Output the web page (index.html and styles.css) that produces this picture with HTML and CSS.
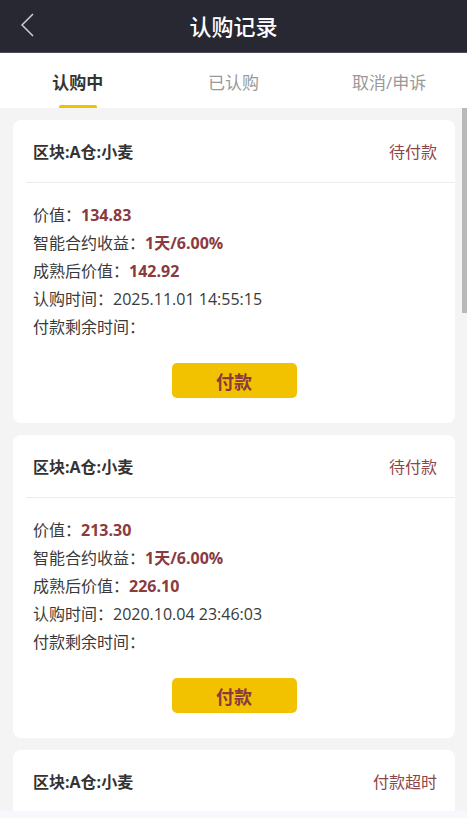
FILE: index.html
```html
<!DOCTYPE html>
<html lang="zh-CN">
<head>
<meta charset="utf-8">
<title>认购记录</title>
<link rel="stylesheet" href="styles.css">
</head>
<body>
<div class="app">
  <header class="topbar">
    <svg class="back" width="16" height="26" viewBox="0 0 16 26"><polyline points="12,1 1,12 12,23" fill="none" stroke="#d0d0d4" stroke-width="1.5"/></svg>
    <h1 class="title">认购记录</h1>
  </header>
  <nav class="tabs">
    <div class="tab active">认购中</div>
    <div class="tab">已认购</div>
    <div class="tab">取消/申诉</div>
  </nav>
  <div class="viewport">
    <main class="list">
      <section class="card">
        <div class="card-head"><span class="name">区块:A仓:小麦</span><span class="status">待付款</span></div>
        <div class="divider"></div>
        <div class="card-body">
          <p>价值：<b>134.83</b></p>
          <p>智能合约收益：<b>1天/6.00%</b></p>
          <p>成熟后价值：<b>142.92</b></p>
          <p>认购时间：2025.11.01 14:55:15</p>
          <p>付款剩余时间：</p>
        </div>
        <div class="actions"><button class="pay">付款</button></div>
      </section>
      <section class="card">
        <div class="card-head"><span class="name">区块:A仓:小麦</span><span class="status">待付款</span></div>
        <div class="divider"></div>
        <div class="card-body">
          <p>价值：<b>213.30</b></p>
          <p>智能合约收益：<b>1天/6.00%</b></p>
          <p>成熟后价值：<b>226.10</b></p>
          <p>认购时间：2020.10.04 23:46:03</p>
          <p>付款剩余时间：</p>
        </div>
        <div class="actions"><button class="pay">付款</button></div>
      </section>
      <section class="card">
        <div class="card-head"><span class="name">区块:A仓:小麦</span><span class="status">付款超时</span></div>
      </section>
    </main>
    <div class="thumb"></div>
  </div>
</div>
</body>
</html>
```
FILE: styles.css
```css
* { box-sizing: border-box; }
html, body { margin: 0; padding: 0; }
body {
  background: #f7f8fc;
  font-family: "Open Sans", "Noto Sans CJK SC", sans-serif;
  color: #333;
}
.app {
  width: 467px;
  height: 811px;
  display: flex;
  flex-direction: column;
  background: #f4f4f4;
}
.topbar {
  height: 53px;
  flex: none;
  background: #282833;
  border-bottom: 1px solid #4e4e58;
  display: flex;
  align-items: center;
  justify-content: center;
  position: relative;
}
.back {
  position: absolute;
  left: 21px;
  top: 13px;
}
.title {
  margin: 0;
  color: #fff;
  font-size: 22px;
  font-weight: 500;
  line-height: 1;
}
.tabs {
  height: 55px;
  flex: none;
  background: #fff;
  display: grid;
  grid-template-columns: repeat(3, 1fr);
}
.tab {
  display: flex;
  align-items: center;
  justify-content: center;
  font-size: 17px;
  color: #999;
  position: relative;
  padding-top: 1px;
}
.tab.active {
  color: #333;
  font-weight: 700;
}
.tab.active::after {
  content: "";
  position: absolute;
  left: 50%;
  bottom: 0;
  width: 38px;
  height: 3px;
  margin-left: -19px;
  border-radius: 2px 2px 0 0;
  background: #f2c200;
}
.viewport {
  flex: 1;
  min-height: 0;
  position: relative;
  overflow: hidden;
}
.list {
  height: 100%;
  overflow: hidden;
  padding: 12px 12px 12px 13px;
  display: flex;
  flex-direction: column;
  gap: 12px;
}
.thumb {
  position: absolute;
  top: 0;
  right: 0;
  width: 5px;
  height: 205px;
  background: #b9b9b9;
}
.card {
  flex: none;
  background: #fff;
  border-radius: 8px;
  padding-bottom: 25px;
}
.card-head {
  height: 62px;
  display: flex;
  align-items: center;
  justify-content: space-between;
  padding: 0 18px 0 20px;
}
.name {
  font-size: 16px;
  font-weight: 700;
  color: #333;
}
.status {
  font-size: 16px;
  color: #8c4548;
}
.divider {
  height: 1px;
  margin-left: 13px;
  background: #ececec;
}
.card-body {
  padding: 18px 20px 0;
}
.card-body p {
  margin: 0;
  font-size: 16px;
  line-height: 28px;
  color: #3a3a3a;
}
.card-body b {
  color: #8b3a3e;
  font-weight: 700;
}
.actions {
  display: flex;
  justify-content: center;
  padding-top: 22px;
}
.pay {
  width: 125px;
  height: 35px;
  border: none;
  border-radius: 5px;
  background: #f2c200;
  color: #8b3a3e;
  font-family: inherit;
  font-size: 18px;
  font-weight: 700;
  padding: 0;
}
```
